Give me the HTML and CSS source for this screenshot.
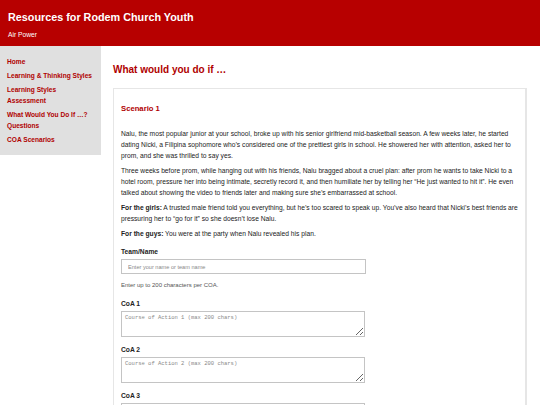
FILE: index.html
```html
<!DOCTYPE html>
<html>
<head>
<meta charset="utf-8">
<link rel="stylesheet" href="styles.css">
</head>
<body>
<header class="site-header">
  <div class="site-title">Resources for Rodem Church Youth</div>
  <div class="site-sub">Air Power</div>
</header>
<div class="layout">
  <nav class="sidebar">
    <a href="#">Home</a>
    <a href="#">Learning &amp; Thinking Styles</a>
    <a href="#">Learning Styles Assessment</a>
    <a href="#">What Would You Do If …? Questions</a>
    <a href="#">COA Scenarios</a>
  </nav>
  <main class="main">
    <h2 class="page-title">What would you do if …</h2>
    <section class="card">
      <h3 class="scenario-title">Scenario 1</h3>
      <p>Nalu, the most popular junior at your school, broke up with his senior girlfriend mid-basketball season. A few weeks later, he started dating Nicki, a Filipina sophomore who’s considered one of the prettiest girls in school. He showered her with attention, asked her to prom, and she was thrilled to say yes.</p>
      <p>Three weeks before prom, while hanging out with his friends, Nalu bragged about a cruel plan: after prom he wants to take Nicki to a hotel room, pressure her into being intimate, secretly record it, and then humiliate her by telling her “He just wanted to hit it”. He even talked about showing the video to friends later and making sure she’s embarrassed at school.</p>
      <p><strong>For the girls:</strong> A trusted male friend told you everything, but he’s too scared to speak up. You’ve also heard that Nicki’s best friends are pressuring her to “go for it” so she doesn’t lose Nalu.</p>
      <p><strong>For the guys:</strong> You were at the party when Nalu revealed his plan.</p>
      <label class="field-label">Team/Name</label>
      <input class="text-input" type="text" placeholder="Enter your name or team name">
      <p class="hint">Enter up to 200 characters per COA.</p>
      <label class="field-label">CoA 1</label>
      <textarea class="coa" placeholder="Course of Action 1 (max 200 chars)"></textarea>
      <label class="field-label">CoA 2</label>
      <textarea class="coa" placeholder="Course of Action 2 (max 200 chars)"></textarea>
      <label class="field-label">CoA 3</label>
      <textarea class="coa" placeholder="Course of Action 3 (max 200 chars)"></textarea>
    </section>
  </main>
</div>
</body>
</html>
```

FILE: styles.css
```css
* { box-sizing: border-box; }
html, body { margin: 0; padding: 0; }
body {
  font-family: "Liberation Sans", Arial, sans-serif;
  color: #222;
  background: #fff;
  overflow: hidden;
}
.site-header {
  background: #b70000;
  color: #fff;
  height: 46px;
  padding: 10px 8px 0;
}
.site-title {
  font-size: 10.8px;
  font-weight: bold;
  line-height: 15px;
}
.site-sub {
  font-size: 6.7px;
  line-height: 10px;
  margin-top: 5px;
}
.layout {
  display: flex;
  align-items: flex-start;
}
.sidebar {
  width: 101px;
  flex: none;
  background: #e0e0e0;
  padding: 10px 7px 10px 7px;
  display: flex;
  flex-direction: column;
  gap: 3px;
}
.sidebar a {
  color: #b00000;
  font-weight: bold;
  font-size: 6.6px;
  line-height: 11px;
  text-decoration: none;
}
.main {
  flex: 1;
  padding: 16px 13px 0 12px;
}
.page-title {
  color: #b00000;
  font-size: 10px;
  line-height: 16px;
  margin: 0 0 10px;
}
.card {
  border: 1px solid #e6e6e6;
  border-right-width: 2px;
  padding: 12px 7px 20px;
}
.scenario-title {
  color: #b00000;
  font-size: 7.7px;
  line-height: 12px;
  margin: 2px 0 13px;
}
.card p {
  font-size: 6.7px;
  line-height: 11px;
  margin: 0 0 4px;
}
.card strong { font-weight: bold; }
.field-label {
  display: block;
  font-weight: bold;
  font-size: 6.7px;
  line-height: 11px;
  margin-top: 7px;
  margin-bottom: 2px;
}
.text-input {
  display: block;
  width: 245px;
  height: 15px;
  border: 1px solid #c4c4c4;
  border-radius: 0;
  padding: 0 6px;
  font-family: "Liberation Sans", Arial, sans-serif;
  font-size: 5.6px;
  margin: 0 0 6px;
}
.text-input::placeholder { color: #888; }
.card p.hint {
  color: #555;
  font-size: 6px;
  margin-bottom: 4px;
}
.coa {
  display: block;
  width: 244px;
  height: 26px;
  border: 1px solid #c4c4c4;
  border-radius: 0;
  padding: 2px 3px;
  font-family: "Liberation Mono", monospace;
  font-size: 5.5px;
  margin: 0;
}
.coa::placeholder { color: #888; }
```
